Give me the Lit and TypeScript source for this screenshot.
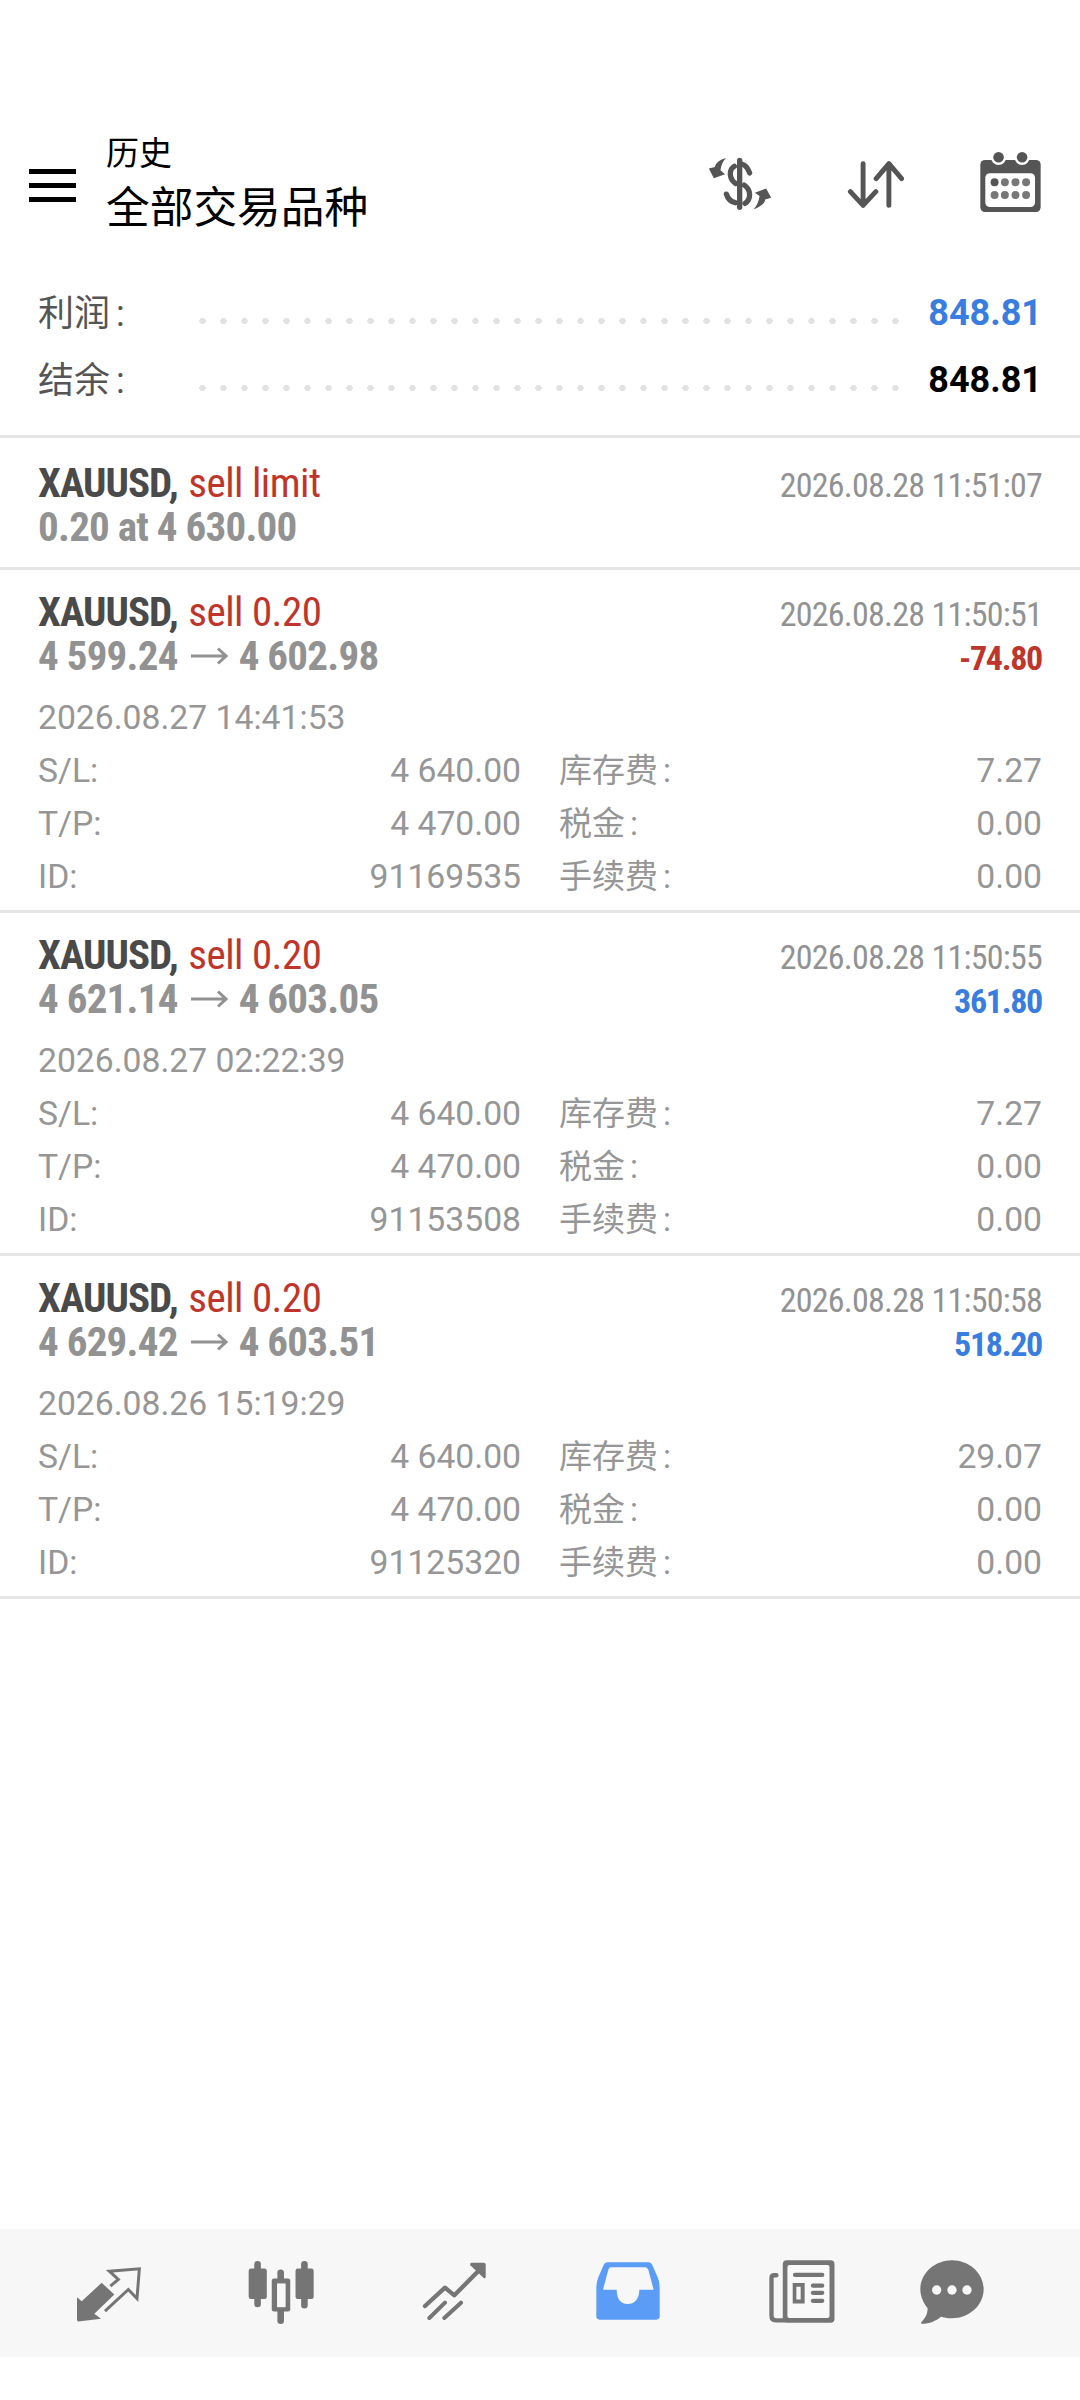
import { LitElement, html, css, svg } from "lit";
import { customElement } from "lit/decorators.js";

const trades = [
  { open: "4 599.24", close: "4 602.98", time: "2026.08.28 11:50:51", pnl: "-74.80", loss: true, start: "2026.08.27 14:41:53", swap: "7.27", id: "91169535" },
  { open: "4 621.14", close: "4 603.05", time: "2026.08.28 11:50:55", pnl: "361.80", loss: false, start: "2026.08.27 02:22:39", swap: "7.27", id: "91153508" },
  { open: "4 629.42", close: "4 603.51", time: "2026.08.28 11:50:58", pnl: "518.20", loss: false, start: "2026.08.26 15:19:29", swap: "29.07", id: "91125320" },
];

@customElement("app-root")
export class AppRoot extends LitElement {
  static styles = css`
    :host { display: flex; flex-direction: column; height: 2400px; padding: 120px 0 43px; box-sizing: border-box; background: #fff; font-family: Roboto, "Noto Sans CJK SC", sans-serif; overflow: hidden; }
    svg { display: block; flex: none; }
    .header { display: flex; align-items: flex-start; height: 160px; padding: 0 39px 0 29px; box-sizing: border-box; }
    .burger { width: 47px; margin-top: 49px; display: flex; flex-direction: column; gap: 9px; }
    .burger i { display: block; height: 5px; background: #000; }
    .titles { margin: 14px 0 0 30px; color: #000; }
    .t1 { font-size: 33px; line-height: 40px; }
    .t2 { font-size: 43.7px; line-height: 52px; margin-top: 8px; }
    .i-dollar { margin: 37px 0 0 auto; }
    .i-sort { margin: 41px 0 0 75px; }
    .i-cal { margin: 32px 0 0 76px; }
    .sum { display: flex; align-items: center; height: 67px; padding: 0 38px 0 38px; }
    .sum-label { width: 154px; font-size: 36px; color: #555; margin-bottom: 7px; }
    .sum-label b { font-weight: 400; margin-left: 6px; }
    .dots { width: 714px; height: 6px; margin-top: 14px; background-image: radial-gradient(circle at center, #e2e2e2 0 3px, transparent 3.4px); background-size: 21px 6px; }
    .sum-val { margin: 0 0 2px auto; font-size: 36px; font-weight: 700; color: #000; }
    .blue { color: #3a7de0 !important; }
    .red { color: #c0352b !important; }
    .sums { padding-bottom: 21px; border-bottom: 3px solid #e6e6e6; }
    .order, .trade { padding: 0 38px; border-bottom: 3px solid #e6e6e6; }
    .order { padding-top: 22px; padding-bottom: 17px; }
    .trade { padding-top: 19px; padding-bottom: 7.5px; }
    .line { display: flex; justify-content: space-between; align-items: baseline; height: 46px; line-height: 46px; }
    .line.first { height: 44px; }
    .cond { font-family: "Roboto Condensed", "Liberation Sans Narrow", Roboto, sans-serif; font-stretch: 75%; }
    .sym { font-size: 41px; font-weight: 700; color: #4a4a4a; letter-spacing: -1px; }
    .side { font-weight: 400; color: #c0352b; margin-left: 2px; letter-spacing: -.5px; }
    .price { font-size: 41px; font-weight: 700; color: #929292; letter-spacing: -.75px; display: inline-flex; align-items: center; }
    .arrow { margin: 0 11px 0 13px; }
    .when { font-size: 34px; color: #929292; letter-spacing: -.75px; }
    .pnl { font-size: 34px; font-weight: 700; letter-spacing: -1.3px; }
    .start { font-size: 33.7px; line-height: 53px; color: #969696; margin-top: 11.5px; }
    .meta { display: grid; grid-template-columns: 1fr 1fr; column-gap: 38px; }
    .m { display: flex; justify-content: space-between; height: 53px; line-height: 53px; font-size: 33.7px; color: #969696; }
    .zh { font-size: 33px; }
    .zh b { font-weight: 400; margin-left: 5px; }
    .bar { margin-top: auto; height: 128px; background: #f7f7f7; display: flex; align-items: flex-start; }
    .b1 { margin: 37px 0 0 76px; }
    .b2 { margin: 31px 0 0 107px; }
    .b3 { margin: 33px 0 0 108px; }
    .b4 { margin: 33px 0 0 110px; }
    .b5 { margin: 31px 0 0 109px; }
    .b6 { margin: 31px 0 0 85px; }
  `;

  private row(label: string, val: string, cls = "") {
    return html`<div class="sum"><span class="sum-label">${label}<b>:</b></span><span class="dots"></span><span class="sum-val ${cls}">${val}</span></div>`;
  }

  private m(k: string, v: string, zh = false) {
    return zh
      ? html`<div class="m"><span class="zh">${k}<b>:</b></span><span>${v}</span></div>`
      : html`<div class="m"><span>${k}:</span><span>${v}</span></div>`;
  }

  render() {
    return html`
      <div class="header">
        <div class="burger"><i></i><i></i><i></i></div>
        <div class="titles"><div class="t1">历史</div><div class="t2">全部交易品种</div></div>
        ${iconDollar} ${iconSort} ${iconCal}
      </div>
      <div class="sums">
        ${this.row("利润", "848.81", "blue")}
        ${this.row("结余", "848.81")}
      </div>
      <div class="order">
        <div class="line first"><span class="cond sym">XAUUSD, <span class="side">sell limit</span></span><span class="cond when">2026.08.28 11:51:07</span></div>
        <div class="line"><span class="cond price">0.20 at 4 630.00</span></div>
      </div>
      ${trades.map(t => html`
        <div class="trade">
          <div class="line first"><span class="cond sym">XAUUSD, <span class="side">sell 0.20</span></span><span class="cond when">${t.time}</span></div>
          <div class="line"><span class="cond price">${t.open}${arrow}${t.close}</span><span class="cond pnl ${t.loss ? "red" : "blue"}">${t.pnl}</span></div>
          <div class="start">${t.start}</div>
          <div class="meta">
            ${this.m("S/L", "4 640.00")}${this.m("库存费", t.swap, true)}
            ${this.m("T/P", "4 470.00")}${this.m("税金", "0.00", true)}
            ${this.m("ID", t.id)}${this.m("手续费", "0.00", true)}
          </div>
        </div>`)}
      <div class="bar">${icon1}${icon2}${icon3}${icon4}${icon5}${icon6}</div>
    `;
  }
}

const G = "#757575";
const D = "#555";

const arrow = html`<svg class="arrow" width="37" height="18" viewBox="0 0 37 18" fill="none" stroke="#929292" stroke-width="3"><path d="M0 9H35M27 1.5L35 9L27 16.5"/></svg>`;

const iconDollar = html`<svg class="i-dollar" width="64" height="53" viewBox="143 110 192 160" fill="none" stroke=${D} stroke-width="16" stroke-linecap="round">
  <path d="M238 120V262"/>
  <path d="M268 158C262 142 254 134 246 132"/>
  <path d="M222 138C205 148 205 175 226 190"/>
  <path d="M252 195C274 210 272 238 254 250"/>
  <path d="M225 248C210 245 202 235 198 222"/>
  <path stroke="none" fill=${D} d="M197 113C178 118 166 128 163 140L145 145L160 174L194 162L180 150C182 135 187 122 197 113Z"/>
  <path stroke="none" fill=${D} d="M280 268C300 262 314 250 315 238L333 233L318 205L284 218L298 228C296 243 290 258 280 268Z"/>
</svg>`;

const iconSort = html`<svg class="i-sort" width="57" height="47" viewBox="558 118 174 144" fill="none" stroke=${D} stroke-width="15" stroke-linecap="round" stroke-linejoin="round">
  <path d="M607 126V254M568 212L607 254L646 212"/>
  <path d="M686 254V126M647 172L686 126L725 172"/>
</svg>`;

const iconCal = html`<svg class="i-cal" width="61" height="60" viewBox="960 96 182 181">
  <rect x="960" y="120" width="182" height="157" rx="14" fill=${D}/>
  <rect x="975" y="160" width="150" height="102" rx="14" fill="#fff"/>
  <circle cx="1015" cy="112" r="23" fill="#fff"/><circle cx="1086" cy="112" r="23" fill="#fff"/>
  <circle cx="1015" cy="112" r="16" fill=${D}/><circle cx="1086" cy="112" r="16" fill=${D}/>
  ${[187, 226].map(y => [1003, 1034, 1066, 1098].map(x => svg`<circle cx=${x} cy=${y} r="12" fill=${x === 1003 && y === 187 ? D : "#777"}/>`))}
</svg>`;

const icon1 = html`<svg class="b1" width="65" height="57" viewBox="105 135 195 170">
  <path fill=${G} d="M108 228L122 240L182 185L220 220L160 278L180 293L112 301Q108 301 108 296Z"/>
  <path fill="none" stroke=${G} stroke-width="9" d="M192 270L262 205L288 232L295 143L205 150L232 175L208 195"/>
</svg>`;

const icon2 = html`<svg class="b2" width="66" height="65" viewBox="620 120 200 195" fill=${G}>
  <rect x="639" y="122" width="20" height="140" rx="10"/>
  <rect x="622" y="145" width="55" height="92" rx="7"/>
  <rect x="709" y="148" width="20" height="165" rx="10"/>
  <rect x="692" y="175" width="56" height="100" rx="7"/>
  <rect x="708" y="190" width="26" height="72" fill="#f7f7f7"/>
  <rect x="781" y="122" width="20" height="144" rx="10"/>
  <rect x="764" y="145" width="55" height="92" rx="7"/>
</svg>`;

const icon3 = html`<svg class="b3" width="64" height="58" viewBox="1143 128 192 174" fill="none" stroke=${G} stroke-linecap="round" stroke-linejoin="round">
  <path stroke-width="13" d="M1152 260L1212 205L1240 228L1315 152"/>
  <path stroke-width="12" d="M1165 296L1212 250M1210 296L1260 250"/>
  <path stroke="none" fill=${G} d="M1292 130H1328Q1334 130 1334 136V172Q1334 178 1328 176L1288 138Q1286 130 1292 130Z"/>
</svg>`;

const icon4 = html`<svg class="b4" width="64" height="58" viewBox="105 129 192 174">
  <path fill="#5b9cf6" d="M140 130H262Q270 130 275 140L290 175Q296 190 296 205V292Q296 302 286 302H116Q106 302 106 292V205Q106 190 112 175L127 140Q132 130 140 130Z"/>
  <path fill="#f7f7f7" d="M150 145H252Q258 145 262 152L278 212H235C235 240 220 255 200 255C180 255 167 240 167 212H126L142 152Q145 145 150 145Z"/>
</svg>`;

const icon5 = html`<svg class="b5" width="66" height="63" viewBox="626 121 198 190">
  <rect x="667" y="122" width="156" height="188" rx="12" fill=${G}/>
  <rect x="681" y="136" width="127" height="160" rx="6" fill="#f9f9f9"/>
  <path fill="none" stroke=${G} stroke-width="13" stroke-linecap="round" d="M648 167H641Q633 167 633 175V290Q633 303 646 303H672"/>
  <path fill="none" stroke=${G} stroke-width="13" stroke-linecap="round" d="M704 166H786M758 198H786M758 220H786M758 244H786"/>
  <path fill=${G} fill-rule="evenodd" d="M697 190H733V252H697ZM708 202V240H721V202Z"/>
</svg>`;

const icon6 = html`<svg class="b6" width="64" height="64" viewBox="1077 120 192 192">
  <path fill=${G} d="M1173 121C1225 121 1268 160 1268 208C1268 256 1225 295 1173 295C1158 295 1148 292 1140 290C1125 303 1105 311 1083 311Q1078 310 1082 305C1092 296 1100 282 1100 265C1088 250 1078 230 1078 208C1078 160 1121 121 1173 121Z"/>
  <circle cx="1127" cy="210" r="14" fill="#f7f7f7"/><circle cx="1173" cy="210" r="14" fill="#f7f7f7"/><circle cx="1218" cy="210" r="14" fill="#f7f7f7"/>
</svg>`;
